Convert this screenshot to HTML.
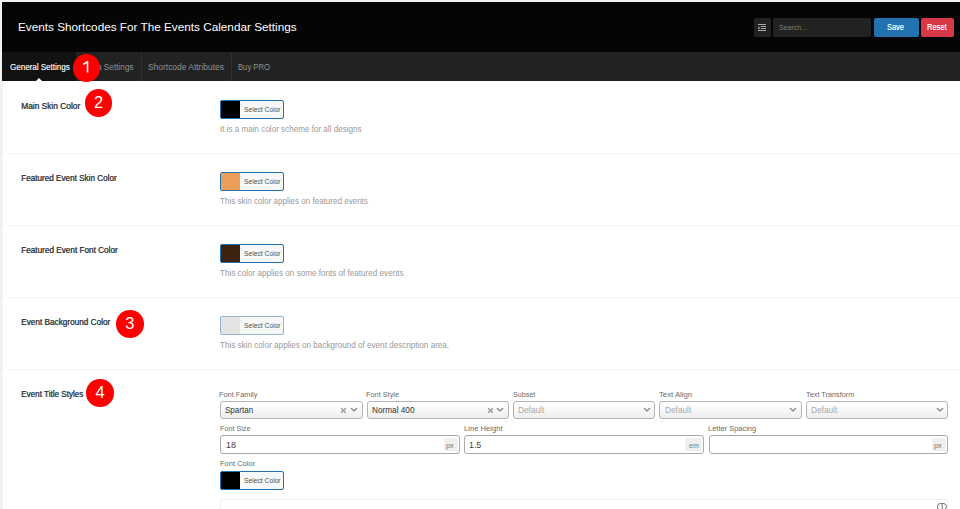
<!DOCTYPE html>
<html><head><meta charset="utf-8"><style>
*{box-sizing:border-box;margin:0;padding:0}
html,body{width:960px;height:509px;overflow:hidden;background:#f2f2f2;font-family:"Liberation Sans",sans-serif}
.b{position:absolute}
.t{position:absolute;white-space:nowrap;line-height:1;transform-origin:0 0}
</style></head><body>
<div class="b" style="left:2.50px;top:2.00px;width:957.50px;height:507.00px;background:#fff"></div>
<div class="b" style="left:2.40px;top:2.00px;width:957.60px;height:50.00px;background:#050505"></div>
<div class="b" style="left:753.80px;top:18.00px;width:16.80px;height:18.80px;background:#222;border-radius:1.5px"></div>
<div class="b" style="left:758.00px;top:24.00px;width:8.00px;height:0.90px;background:#a8a8a8"></div>
<div class="b" style="left:760.50px;top:26.10px;width:5.50px;height:0.90px;background:#a8a8a8"></div>
<div class="b" style="left:760.50px;top:28.20px;width:5.50px;height:0.90px;background:#a8a8a8"></div>
<div class="b" style="left:758.00px;top:30.30px;width:8.00px;height:0.90px;background:#a8a8a8"></div>
<svg class="b" style="left:757.5px;top:25.5px" width="3" height="4" viewBox="0 0 3 4"><path d="M0.3 0.3 L2.6 2 L0.3 3.7Z" fill="#a0a0a0"/></svg>
<div class="b" style="left:773.20px;top:18.00px;width:97.60px;height:18.80px;background:#222;border-radius:1.5px"></div>
<div class="b" style="left:873.90px;top:18.00px;width:44.80px;height:18.90px;background:#2271b1;border-radius:2px"></div>
<div class="b" style="left:921.10px;top:18.00px;width:32.80px;height:18.90px;background:#d63848;border-radius:2px"></div>
<div class="b" style="left:2.40px;top:52.00px;width:957.60px;height:28.50px;background:#222"></div>
<div class="b" style="left:2.40px;top:52.00px;width:73.60px;height:28.50px;background:#121212"></div>
<div class="b" style="left:141.30px;top:52.00px;width:1.00px;height:28.50px;background:#2e2e2e"></div>
<div class="b" style="left:231.30px;top:52.00px;width:1.00px;height:28.50px;background:#2e2e2e"></div>
<div class="b" style="left:36.3px;top:78px;width:0;height:0;border-left:3px solid transparent;border-right:3px solid transparent;border-bottom:3px solid #fff"></div>
<div class="b" style="left:2.50px;top:153.00px;width:957.50px;height:1.00px;background:#f4f4f2"></div>
<div class="b" style="left:2.50px;top:225.00px;width:957.50px;height:1.00px;background:#f4f4f2"></div>
<div class="b" style="left:2.50px;top:297.00px;width:957.50px;height:1.00px;background:#f4f4f2"></div>
<div class="b" style="left:2.50px;top:369.00px;width:957.50px;height:1.00px;background:#f4f4f2"></div>
<div class="b" style="left:220.30px;top:99.80px;width:64.00px;height:19.00px;background:#f6f7f7;border:1px solid #2271b1;border-radius:2px;overflow:hidden"></div>
<div class="b" style="left:221.30px;top:100.80px;width:18.40px;height:17.00px;background:#000000"></div>
<div class="b" style="left:220.30px;top:171.80px;width:64.00px;height:19.00px;background:#f6f7f7;border:1px solid #2271b1;border-radius:2px;overflow:hidden"></div>
<div class="b" style="left:221.30px;top:172.80px;width:18.40px;height:17.00px;background:#ec9f5b"></div>
<div class="b" style="left:220.30px;top:243.80px;width:64.00px;height:19.00px;background:#f6f7f7;border:1px solid #2271b1;border-radius:2px;overflow:hidden"></div>
<div class="b" style="left:221.30px;top:244.80px;width:18.40px;height:17.00px;background:#3d2210"></div>
<div class="b" style="left:220.30px;top:315.80px;width:64.00px;height:19.00px;background:#f6f7f7;border:1px solid #8fb5d9;border-radius:2px;overflow:hidden"></div>
<div class="b" style="left:221.30px;top:316.80px;width:18.40px;height:17.00px;background:#e4e4e4"></div>
<div class="b" style="left:220.30px;top:470.60px;width:64.00px;height:19.00px;background:#f6f7f7;border:1px solid #2271b1;border-radius:2px;overflow:hidden"></div>
<div class="b" style="left:221.30px;top:471.60px;width:18.40px;height:17.00px;background:#000000"></div>
<div class="b" style="left:220.30px;top:401.20px;width:142.30px;height:17.40px;border:1px solid #b4b4b4;border-radius:3px;background:linear-gradient(#ffffff 0%,#f7f7f7 50%,#eeeeee 100%)"></div>
<svg class="b" style="left:348.90px;top:406px" width="10" height="6" viewBox="0 0 10 6"><path d="M2 2.1 L5 4.9 L8 2.1" fill="none" stroke="#7a7a7a" stroke-width="1.25"/></svg>
<svg class="b" style="left:340.30px;top:406.6px" width="7" height="7" viewBox="0 0 7 7"><path d="M1.2 1.2 L5.8 5.8 M5.8 1.2 L1.2 5.8" fill="none" stroke="#9a9a9a" stroke-width="1.4"/></svg>
<div class="b" style="left:366.70px;top:401.20px;width:142.30px;height:17.40px;border:1px solid #b4b4b4;border-radius:3px;background:linear-gradient(#ffffff 0%,#f7f7f7 50%,#eeeeee 100%)"></div>
<svg class="b" style="left:495.30px;top:406px" width="10" height="6" viewBox="0 0 10 6"><path d="M2 2.1 L5 4.9 L8 2.1" fill="none" stroke="#7a7a7a" stroke-width="1.25"/></svg>
<svg class="b" style="left:486.70px;top:406.6px" width="7" height="7" viewBox="0 0 7 7"><path d="M1.2 1.2 L5.8 5.8 M5.8 1.2 L1.2 5.8" fill="none" stroke="#9a9a9a" stroke-width="1.4"/></svg>
<div class="b" style="left:513.20px;top:401.20px;width:142.30px;height:17.40px;border:1px solid #b4b4b4;border-radius:3px;background:linear-gradient(#ffffff 0%,#f7f7f7 50%,#eeeeee 100%)"></div>
<svg class="b" style="left:641.80px;top:406px" width="10" height="6" viewBox="0 0 10 6"><path d="M2 2.1 L5 4.9 L8 2.1" fill="none" stroke="#7a7a7a" stroke-width="1.25"/></svg>
<div class="b" style="left:659.40px;top:401.20px;width:142.30px;height:17.40px;border:1px solid #b4b4b4;border-radius:3px;background:linear-gradient(#ffffff 0%,#f7f7f7 50%,#eeeeee 100%)"></div>
<svg class="b" style="left:788.00px;top:406px" width="10" height="6" viewBox="0 0 10 6"><path d="M2 2.1 L5 4.9 L8 2.1" fill="none" stroke="#7a7a7a" stroke-width="1.25"/></svg>
<div class="b" style="left:805.90px;top:401.20px;width:142.30px;height:17.40px;border:1px solid #b4b4b4;border-radius:3px;background:linear-gradient(#ffffff 0%,#f7f7f7 50%,#eeeeee 100%)"></div>
<svg class="b" style="left:934.50px;top:406px" width="10" height="6" viewBox="0 0 10 6"><path d="M2 2.1 L5 4.9 L8 2.1" fill="none" stroke="#7a7a7a" stroke-width="1.25"/></svg>
<div class="b" style="left:220.40px;top:435.20px;width:240.10px;height:18.40px;border:1px solid #a9a9a9;border-radius:3px;background:#fff"></div>
<div class="b" style="left:443.70px;top:438.10px;width:14.10px;height:13.00px;background:#efefef;border-radius:2px"></div>
<div class="b" style="left:464.20px;top:435.20px;width:240.20px;height:18.40px;border:1px solid #a9a9a9;border-radius:3px;background:#fff"></div>
<div class="b" style="left:684.90px;top:438.10px;width:16.80px;height:13.00px;background:#efefef;border-radius:2px"></div>
<div class="b" style="left:708.50px;top:435.20px;width:239.80px;height:18.40px;border:1px solid #a9a9a9;border-radius:3px;background:#fff"></div>
<div class="b" style="left:931.50px;top:438.10px;width:14.10px;height:13.00px;background:#efefef;border-radius:2px"></div>
<div class="b" style="left:220.30px;top:499.30px;width:728.00px;height:20.00px;border:1px solid #efefef;border-radius:2px"></div>
<svg class="b" style="left:936px;top:502px" width="12" height="9" viewBox="0 0 12 9"><rect x="1.4" y="1.4" width="9" height="6.6" rx="3.3" fill="none" stroke="#707070" stroke-width="1"/><path d="M6.2 1.4 L6.2 8" stroke="#707070" stroke-width="1"/></svg>
<span id="title" class="t" style="left:18.04px;top:20.78px;font-size:11.60px;color:#fff;font-weight:normal;transform:scaleX(1.0132);">Events Shortcodes For The Events Calendar Settings</span>
<span id="search" class="t" style="left:778.88px;top:23.93px;font-size:8.00px;color:#7c7c7c;font-weight:normal;transform:scaleX(0.8732);">Search...</span>
<span id="save" class="t" style="left:887.47px;top:22.65px;font-size:8.80px;color:#fff;font-weight:normal;transform:scaleX(0.8354);text-shadow:0.3px 0 0 rgba(255,255,255,.6);">Save</span>
<span id="reset" class="t" style="left:927.49px;top:22.65px;font-size:8.80px;color:#fff;font-weight:normal;transform:scaleX(0.8514);text-shadow:0.3px 0 0 rgba(255,255,255,.6);">Reset</span>
<span id="tab1" class="t" style="left:9.70px;top:62.69px;font-size:8.40px;color:#f4f4f4;font-weight:normal;transform:scaleX(0.9568);text-shadow:0.3px 0 0 rgba(255,255,255,.55);">General Settings</span>
<span id="tab2" class="t" style="left:96.95px;top:62.77px;font-size:8.30px;color:#929292;font-weight:normal;transform:scaleX(0.9930);">a Settings</span>
<span id="tab3" class="t" style="left:148.42px;top:62.97px;font-size:8.30px;color:#929292;font-weight:normal;transform:scaleX(1.0156);">Shortcode Attributes</span>
<span id="tab4" class="t" style="left:238.37px;top:62.97px;font-size:8.30px;color:#929292;font-weight:normal;transform:scaleX(0.9249);">Buy PRO</span>
<span id="lbl1" class="t" style="left:21.01px;top:101.58px;font-size:9.00px;color:#383d42;font-weight:normal;transform:scaleX(0.9291);text-shadow:0.45px 0 0 rgba(40,45,50,.9);">Main Skin Color</span>
<span id="lbl2" class="t" style="left:21.13px;top:173.58px;font-size:9.00px;color:#383d42;font-weight:normal;transform:scaleX(0.9047);text-shadow:0.45px 0 0 rgba(40,45,50,.9);">Featured Event Skin Color</span>
<span id="lbl3" class="t" style="left:21.13px;top:245.58px;font-size:9.00px;color:#383d42;font-weight:normal;transform:scaleX(0.9099);text-shadow:0.45px 0 0 rgba(40,45,50,.9);">Featured Event Font Color</span>
<span id="lbl4" class="t" style="left:21.03px;top:317.58px;font-size:9.00px;color:#383d42;font-weight:normal;transform:scaleX(0.9134);text-shadow:0.45px 0 0 rgba(40,45,50,.9);">Event Background Color</span>
<span id="lbl5" class="t" style="left:21.24px;top:390.18px;font-size:9.00px;color:#383d42;font-weight:normal;transform:scaleX(0.9004);text-shadow:0.45px 0 0 rgba(40,45,50,.9);">Event Title Styles</span>
<span id="desc1" class="t" style="left:219.75px;top:126.06px;font-size:8.20px;color:#9a9a9a;font-weight:normal;transform:scaleX(0.9874);">It is a main color scheme for all designs</span>
<span id="desc2" class="t" style="left:220.42px;top:198.06px;font-size:8.20px;color:#9a9a9a;font-weight:normal;transform:scaleX(0.9815);">This skin color applies on featured events</span>
<span id="desc3" class="t" style="left:220.42px;top:270.06px;font-size:8.20px;color:#9a9a9a;font-weight:normal;transform:scaleX(0.9905);">This color applies on some fonts of featured events</span>
<span id="desc4" class="t" style="left:220.32px;top:342.06px;font-size:8.20px;color:#9a9a9a;font-weight:normal;transform:scaleX(0.9910);">This skin color applies on background of event description area.</span>
<span id="f_ff" class="t" style="left:219.40px;top:391.47px;font-size:7.00px;color:#6b6b6b;font-weight:normal;transform:scaleX(1.0507);">Font Family</span>
<span id="f_fst" class="t" style="left:366.30px;top:391.47px;font-size:7.00px;color:#6b6b6b;font-weight:normal;transform:scaleX(1.0480);">Font Style</span>
<span id="f_sub" class="t" style="left:512.78px;top:391.47px;font-size:7.00px;color:#6b6b6b;font-weight:normal;transform:scaleX(1.0220);">Subset</span>
<span id="f_ta" class="t" style="left:659.43px;top:391.47px;font-size:7.00px;color:#6b6b6b;font-weight:normal;transform:scaleX(1.1037);">Text Align</span>
<span id="f_tt" class="t" style="left:806.14px;top:391.47px;font-size:7.00px;color:#6b6b6b;font-weight:normal;transform:scaleX(1.0443);">Text Transform</span>
<span id="v_sp" class="t" style="left:225.43px;top:405.87px;font-size:8.30px;color:#333;font-weight:normal;transform:scaleX(0.9699);">Spartan</span>
<span id="v_no" class="t" style="left:372.23px;top:405.87px;font-size:8.30px;color:#333;font-weight:normal;transform:scaleX(0.9908);">Normal 400</span>
<span id="v_d1" class="t" style="left:518.07px;top:405.67px;font-size:8.30px;color:#aaa;font-weight:normal;transform:scaleX(0.9978);">Default</span>
<span id="v_d2" class="t" style="left:664.57px;top:405.67px;font-size:8.30px;color:#aaa;font-weight:normal;transform:scaleX(0.9978);">Default</span>
<span id="v_d3" class="t" style="left:811.07px;top:405.67px;font-size:8.30px;color:#aaa;font-weight:normal;transform:scaleX(0.9978);">Default</span>
<span id="f_fsz" class="t" style="left:219.81px;top:424.87px;font-size:7.00px;color:#6b6b6b;font-weight:normal;transform:scaleX(1.0281);">Font Size</span>
<span id="f_lh" class="t" style="left:463.57px;top:424.87px;font-size:7.00px;color:#6b6b6b;font-weight:normal;transform:scaleX(1.0892);">Line Height</span>
<span id="f_ls" class="t" style="left:707.69px;top:424.87px;font-size:7.00px;color:#6b6b6b;font-weight:normal;transform:scaleX(1.0673);">Letter Spacing</span>
<span id="v_18" class="t" style="left:225.63px;top:440.55px;font-size:8.80px;color:#3c4046;font-weight:normal;transform:scaleX(1.0064);">18</span>
<span id="v_15" class="t" style="left:469.33px;top:441.15px;font-size:8.80px;color:#3c4046;font-weight:normal;transform:scaleX(1.0050);">1.5</span>
<span id="f_fc" class="t" style="left:219.78px;top:460.27px;font-size:7.00px;color:#6b6b6b;font-weight:normal;transform:scaleX(1.0751);">Font Color</span>
<span id="u1" class="t" style="left:446.43px;top:441.97px;font-size:7.00px;color:#777;font-weight:normal;transform:scaleX(1.0465);">px</span>
<span id="u2" class="t" style="left:688.60px;top:441.97px;font-size:7.00px;color:#777;font-weight:normal;transform:scaleX(1.0027);">em</span>
<span id="u3" class="t" style="left:934.33px;top:441.97px;font-size:7.00px;color:#777;font-weight:normal;transform:scaleX(1.0465);">px</span>
<span id="sc0" class="t" style="left:243.59px;top:107.09px;font-size:7.10px;color:#4a5158;font-weight:normal;transform:scaleX(0.9476);">Select Color</span>
<span id="sc1" class="t" style="left:243.59px;top:179.09px;font-size:7.10px;color:#4a5158;font-weight:normal;transform:scaleX(0.9476);">Select Color</span>
<span id="sc2" class="t" style="left:243.59px;top:251.09px;font-size:7.10px;color:#4a5158;font-weight:normal;transform:scaleX(0.9476);">Select Color</span>
<span id="sc3" class="t" style="left:243.59px;top:323.09px;font-size:7.10px;color:#4a5158;font-weight:normal;transform:scaleX(0.9476);">Select Color</span>
<span id="sc4" class="t" style="left:243.59px;top:477.89px;font-size:7.10px;color:#4a5158;font-weight:normal;transform:scaleX(0.9476);">Select Color</span>
<div class="b" style="left:72.75px;top:54.30px;width:27.5px;height:27.5px;border-radius:50%;background:#ff0000"></div>
<svg class="b" style="left:72.75px;top:54.30px" width="28" height="28" viewBox="0 0 28 28"><path d="M10.3 10.5 L14.5 7.7 L14.5 18.5" fill="none" stroke="#fff" stroke-width="1.6" stroke-linejoin="round"/></svg>
<div class="b" style="left:84.90px;top:89.20px;width:27.5px;height:27.5px;border-radius:50%;background:#ff0000"></div>
<span class="t" style="left:84.90px;top:93.73px;font-size:16.5px;color:#fff;width:27.5px;text-align:center">2</span>
<div class="b" style="left:116.00px;top:310.00px;width:27.5px;height:27.5px;border-radius:50%;background:#ff0000"></div>
<span class="t" style="left:116.00px;top:314.53px;font-size:16.5px;color:#fff;width:27.5px;text-align:center">3</span>
<div class="b" style="left:86.25px;top:379.00px;width:27.5px;height:27.5px;border-radius:50%;background:#ff0000"></div>
<span class="t" style="left:86.25px;top:383.53px;font-size:16.5px;color:#fff;width:27.5px;text-align:center">4</span>
</body></html>
